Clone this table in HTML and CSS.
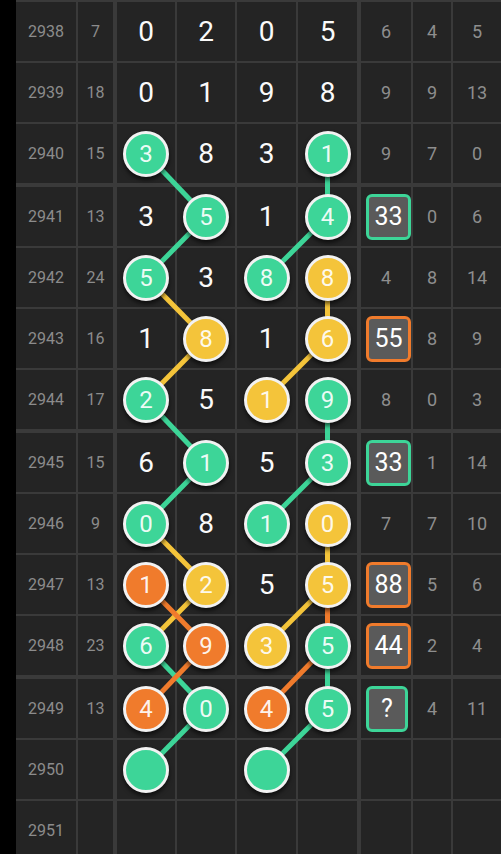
FILE: index.html
```html
<!DOCTYPE html>
<html lang="zh">
<head>
    <meta charset="UTF-8">
    <meta name="viewport" content="width=device-width, initial-scale=1.0">
    <title>走势图</title>
    <link rel="stylesheet" href="styles.css">
</head>
<body>
    <div class="chart" id="chart">
        <svg class="links" id="links"></svg>
    </div>

    <script>
        // 每行: 期号, 和值, 四位号码, 右侧统计
        // "3:g" = 绿色圆, ":y" = 黄色, ":o" = 橙色
        const rows = [
            ['2938', '7',  ['0', '2', '0', '5'],       ['6', '4', '5']],
            ['2939', '18', ['0', '1', '9', '8'],       ['9', '9', '13']],
            ['2940', '15', ['3:g', '8', '3', '1:g'],   ['9', '7', '0']],
            ['2941', '13', ['3', '5:g', '1', '4:g'],   ['33:g', '0', '6']],
            ['2942', '24', ['5:g', '3', '8:g', '8:y'], ['4', '8', '14']],
            ['2943', '16', ['1', '8:y', '1', '6:y'],   ['55:o', '8', '9']],
            ['2944', '17', ['2:g', '5', '1:y', '9:g'], ['8', '0', '3']],
            ['2945', '15', ['6', '1:g', '5', '3:g'],   ['33:g', '1', '14']],
            ['2946', '9',  ['0:g', '8', '1:g', '0:y'], ['7', '7', '10']],
            ['2947', '13', ['1:o', '2:y', '5', '5:y'], ['88:o', '5', '6']],
            ['2948', '23', ['6:g', '9:o', '3:y', '5:g'], ['44:o', '2', '4']],
            ['2949', '13', ['4:o', '0:g', '4:o', '5:g'], ['?:g', '4', '11']],
            ['2950', '',   [':g', '', ':g', ''],       ['', '', '']],
            ['2951', '',   ['', '', '', ''],           ['', '', '']]
        ];

        // 连线: [行, 列] -> [行, 列]
        const links = {
            green: [
                [2, 0, 3, 1], [3, 1, 4, 0], [6, 0, 7, 1], [7, 1, 8, 0], [10, 0, 11, 1], [11, 1, 12, 0],
                [2, 3, 3, 3], [3, 3, 4, 2], [6, 3, 7, 3], [7, 3, 8, 2], [10, 3, 11, 3], [11, 3, 12, 2]
            ],
            yellow: [
                [4, 0, 5, 1], [5, 1, 6, 0], [8, 0, 9, 1], [9, 1, 10, 0],
                [4, 3, 5, 3], [5, 3, 6, 2], [8, 3, 9, 3], [9, 3, 10, 2]
            ],
            orange: [
                [9, 0, 10, 1], [10, 1, 11, 0],
                [9, 3, 10, 3], [10, 3, 11, 2]
            ]
        };
        const colors = { g: 'green', y: 'yellow', o: 'orange' };

        const chart = document.getElementById('chart');

        rows.forEach((r, i) => {
            const row = document.createElement('div');
            row.className = 'row' + (i % 4 === 3 ? ' group-start' : '');

            let html = `<div class="cell issue">${r[0]}</div><div class="cell sum">${r[1]}</div>`;
            r[2].forEach((d, c) => {
                const [num, col] = d.split(':');
                if (col) {
                    html += `<div class="cell digit d${c}"><span class="ball ${colors[col]}" data-pos="${i}-${c}">${num}</span></div>`;
                } else {
                    html += `<div class="cell digit d${c}">${num}</div>`;
                }
            });
            r[3].forEach((s, c) => {
                const [num, col] = s.split(':');
                if (col) {
                    html += `<div class="cell stat s${c}"><span class="badge ${colors[col]}">${num}</span></div>`;
                } else {
                    html += `<div class="cell stat s${c}">${num}</div>`;
                }
            });
            row.innerHTML = html;
            chart.appendChild(row);
        });

        // 圆心坐标
        const svg = document.getElementById('links');
        const box = chart.getBoundingClientRect();
        svg.setAttribute('width', box.width);
        svg.setAttribute('height', box.height);

        function center(r, c) {
            const b = document.querySelector(`[data-pos="${r}-${c}"]`).getBoundingClientRect();
            return [b.left + b.width / 2 - box.left, b.top + b.height / 2 - box.top];
        }

        Object.keys(links).forEach(color => {
            links[color].forEach(([r1, c1, r2, c2]) => {
                const [x1, y1] = center(r1, c1);
                const [x2, y2] = center(r2, c2);
                const line = document.createElementNS('http://www.w3.org/2000/svg', 'line');
                line.setAttribute('x1', x1);
                line.setAttribute('y1', y1);
                line.setAttribute('x2', x2);
                line.setAttribute('y2', y2);
                line.setAttribute('class', 'link ' + color);
                svg.appendChild(line);
            });
        });
    </script>
</body>
</html>
```

FILE: styles.css
```css
html, body {
    height: 854px;
    overflow: hidden;
}
body {
    margin: 0;
    padding-left: 16px;
    background-color: #000;
    font-family: Roboto, 'Noto Sans', sans-serif;
}
.chart {
    position: relative;
    width: 485px;
    display: flex;
    flex-direction: column;
    gap: 2px;
    padding-top: 2px;
    background: #3a3a3a;
}
.links {
    position: absolute;
    top: 0;
    left: 0;
    z-index: 1;
    pointer-events: none;
}
.link {
    stroke-width: 5;
}
.link.green { stroke: #3dd598; }
.link.yellow { stroke: #f4c43a; }
.link.orange { stroke: #f07b2c; }

.row {
    display: flex;
    gap: 2px;
    height: 59px;
}
.row.group-start {
    margin-top: 2px;
}
.cell {
    background: #242424;
    display: flex;
    align-items: center;
    justify-content: center;
}
.issue {
    width: 60px;
    font-size: 16px;
    color: #8c8c8c;
}
.sum {
    width: 35px;
    font-size: 16px;
    color: #8c8c8c;
}
.digit {
    font-size: 28px;
    color: #fafafa;
}
.d0 { width: 58px; margin-left: 2px; }
.d1 { width: 58px; }
.d2 { width: 59px; }
.d3 { width: 59px; }
.stat {
    font-size: 18px;
    color: #8e8e8e;
}
.s0 { width: 50px; margin-left: 2px; }
.s1 { width: 38px; }
.s2 { width: 48px; }

.ball {
    position: relative;
    z-index: 2;
    width: 46px;
    height: 46px;
    box-sizing: border-box;
    border: 3px solid #f2f2f2;
    border-radius: 50%;
    display: flex;
    align-items: center;
    justify-content: center;
    font-size: 24px;
    color: rgba(255,255,255,0.92);
    box-shadow: 0 3px 4px rgba(0,0,0,0.6);
}
.ball.green { background: #3dd598; }
.ball.yellow { background: #f4c43a; }
.ball.orange { background: #f07b2c; }

.badge {
    position: relative;
    min-width: 42px;
    height: 46px;
    box-sizing: border-box;
    margin: 0 auto 0 5px;
    padding: 0 7px;
    border: 3px solid;
    border-radius: 6px;
    background: #5a5a5a;
    color: #fff;
    font-size: 25px;
    display: flex;
    align-items: center;
    justify-content: center;
}
.badge.green { border-color: #3dd598; }
.badge.orange { border-color: #f07b2c; }
```
